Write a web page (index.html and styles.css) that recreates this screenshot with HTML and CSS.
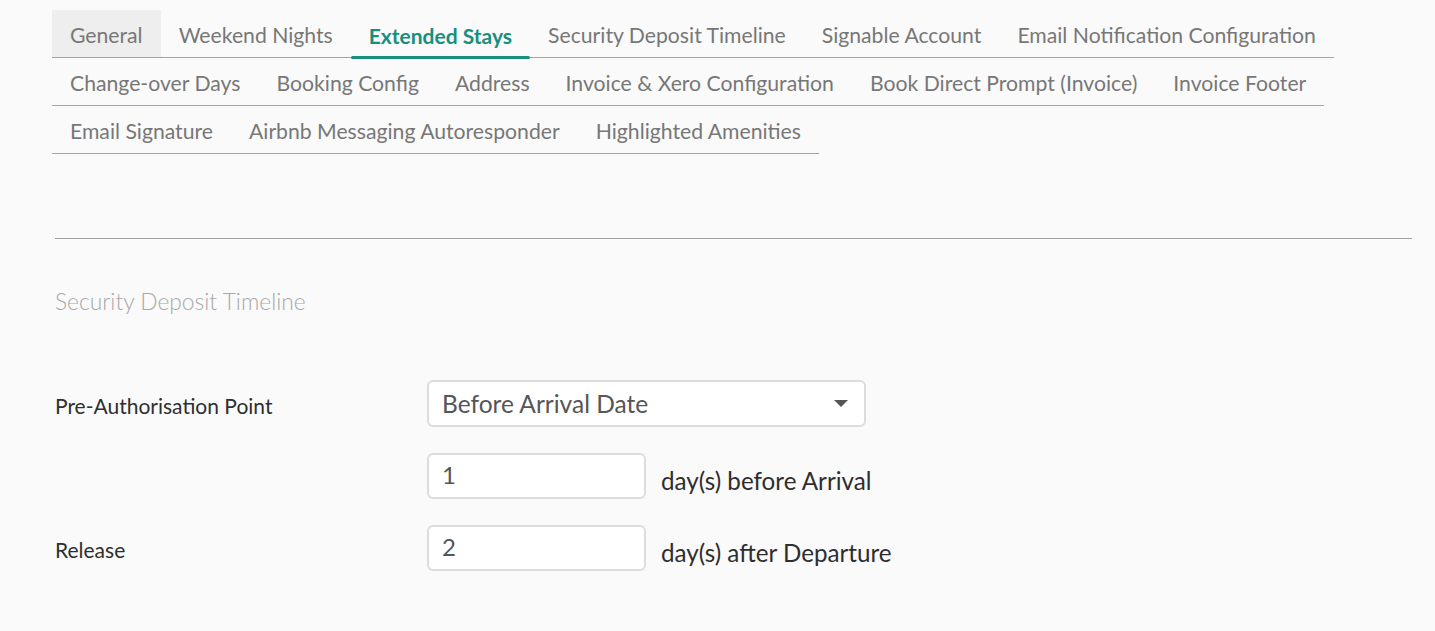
FILE: index.html
```html
<!DOCTYPE html>
<html lang="en">
<head>
<meta charset="utf-8">
<title>Extended Stays</title>
<link rel="stylesheet" href="styles.css">
</head>
<body>
<div class="page">
  <nav class="tabs">
    <div class="tab-row">
      <a class="tab tab-general">General</a>
      <a class="tab">Weekend Nights</a>
      <a class="tab active">Extended Stays</a>
      <a class="tab">Security Deposit Timeline</a>
      <a class="tab">Signable Account</a>
      <a class="tab">Email Notification Configuration</a>
    </div>
    <div class="tab-row">
      <a class="tab">Change-over Days</a>
      <a class="tab">Booking Config</a>
      <a class="tab">Address</a>
      <a class="tab">Invoice &amp; Xero Configuration</a>
      <a class="tab">Book Direct Prompt (Invoice)</a>
      <a class="tab">Invoice Footer</a>
    </div>
    <div class="tab-row">
      <a class="tab">Email Signature</a>
      <a class="tab">Airbnb Messaging Autoresponder</a>
      <a class="tab">Highlighted Amenities</a>
    </div>
  </nav>

  <hr class="divider">

  <section class="section">
    <h2 class="section-title">Security Deposit Timeline</h2>
    <div class="form">
      <div class="form-row row-select">
        <label class="label">Pre-Authorisation Point</label>
        <div class="select">
          <span class="select-value">Before Arrival Date</span>
          <span class="caret"></span>
        </div>
      </div>
      <div class="form-row row-input">
        <span class="label"></span>
        <div class="field">
          <div class="input">1</div>
          <span class="suffix">day(s) before Arrival</span>
        </div>
      </div>
      <div class="form-row row-input">
        <label class="label">Release</label>
        <div class="field">
          <div class="input">2</div>
          <span class="suffix">day(s) after Departure</span>
        </div>
      </div>
    </div>
  </section>
</div>
</body>
</html>
```

FILE: styles.css
```css
* { box-sizing: border-box; }

html, body {
  margin: 0;
  padding: 0;
  background: #fafafa;
}

body {
  font-family: "Lato", "Open Sans", sans-serif;
  color: #333;
}

.page {
  padding: 10px 23px 0 52px;
}

.tabs {
  display: flex;
  flex-direction: column;
  align-items: flex-start;
}

.tab-row {
  display: flex;
  border-bottom: 1px solid #a3a3a3;
}

.tab {
  position: relative;
  display: block;
  height: 47px;
  padding: 13px 18px 9px;
  font-size: 21.2px;
  line-height: 25px;
  color: #777;
  white-space: nowrap;
  cursor: pointer;
}

.tab-general {
  background: #eeeeee;
}

.tab.active {
  color: #168f7e;
  font-weight: 700;
  font-size: 21px;
}

.tab.active::after {
  content: "";
  position: absolute;
  left: 0;
  right: 0;
  bottom: -2px;
  height: 3px;
  border-radius: 2px;
  background: #1a8f7e;
}

.divider {
  margin: 84px 0 0 3px;
  border: 0;
  border-top: 1px solid #a0a0a0;
  height: 0;
}

.section {
  padding-left: 3px;
}

.section-title {
  margin: 49px 0 0;
  font-size: 22.8px;
  line-height: 27px;
  font-weight: 300;
  color: #a8a8a8;
}

.form {
  margin-top: 65px;
  display: flex;
  flex-direction: column;
  gap: 26px;
}

.form-row {
  display: grid;
  grid-template-columns: 372px 1fr;
  align-items: center;
}

.label {
  font-size: 21px;
  color: #2e2e2e;
  padding-top: 3px;
}

.select {
  width: 439px;
  height: 47px;
  border: 2px solid #dcdcdc;
  border-radius: 6px;
  background: #fff;
  display: flex;
  align-items: center;
  justify-content: space-between;
  padding: 0 16px 0 13px;
}

.select-value {
  font-size: 24.5px;
  color: #555;
}

.caret {
  width: 0;
  height: 0;
  border-left: 7px solid transparent;
  border-right: 7px solid transparent;
  border-top: 7px solid #555;
}

.field {
  display: flex;
  align-items: center;
  gap: 15px;
}

.input {
  width: 219px;
  height: 46px;
  border: 2px solid #dcdcdc;
  border-radius: 6px;
  background: #fff;
  padding: 0 13px;
  font-size: 24px;
  line-height: 40px;
  color: #555;
}

.suffix {
  font-size: 24.2px;
  color: #2e2e2e;
  padding-top: 8px;
}
```
